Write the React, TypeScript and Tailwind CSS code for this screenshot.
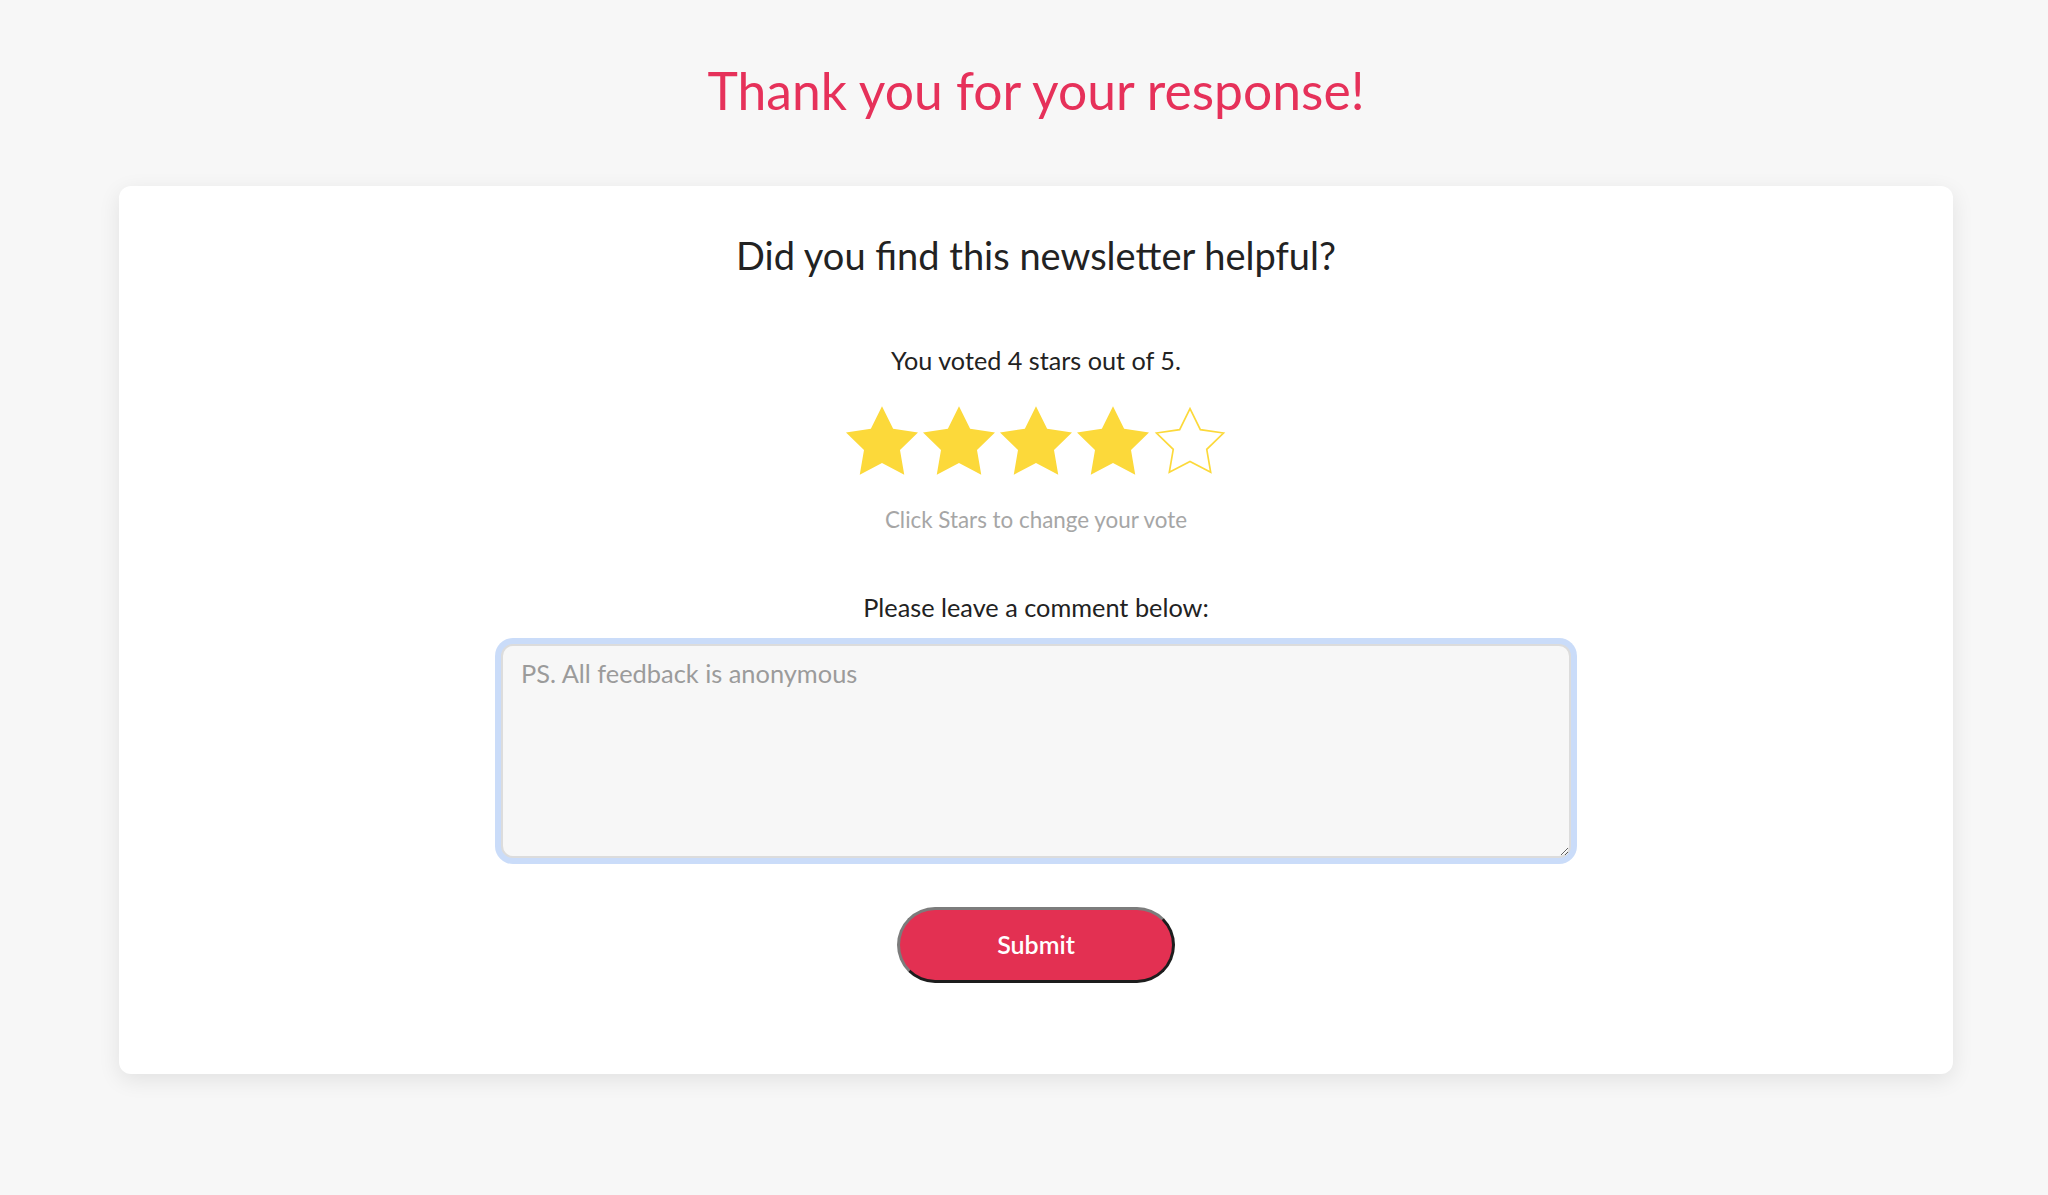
import { useState } from 'react';

const STAR_POINTS = '12,2 15.09,8.26 22,9.27 17,14.14 18.18,21.02 12,17.77 5.82,21.02 7,14.14 2,9.27 8.91,8.26';

function Star({ filled }: { filled: boolean }) {
  return (
    <svg viewBox="2 2 20 19.02" className="h-[69px] w-[72px] overflow-visible">
      {filled ? (
        <polygon points={STAR_POINTS} fill="#fcd93a" />
      ) : (
        <polygon
          points={STAR_POINTS}
          fill="none"
          stroke="#fcd93a"
          strokeWidth="0.5"
          strokeLinejoin="miter"
          transform="translate(12 11.5) scale(0.93) translate(-12 -11.5)"
        />
      )}
    </svg>
  );
}

export default function App() {
  const [rating, setRating] = useState(4);
  const [comment, setComment] = useState('');

  return (
    <div className="min-h-screen bg-[#f7f7f7] pl-[119px] pr-[95px] pt-[59px] font-['Lato','Liberation_Sans',sans-serif]">
      <h1 className="text-center text-[51.6px] leading-[62px] text-[#e6315a]">Thank you for your response!</h1>

      {/* Feedback card */}
      <div className="mt-[65px] flex flex-col items-center rounded-[12px] bg-white pt-[48px] pb-[91px] shadow-[0_6px_22px_rgba(0,0,0,0.09)]">
        <h2 className="text-[38px] leading-[43px] text-[#222222]">Did you find this newsletter helpful?</h2>

        <p className="mt-[68px] text-[25.2px] leading-[31px] text-[#222222]">
          You voted {rating} stars out of 5.
        </p>

        <div className="mt-[30px] flex gap-[5px]">
          {[1, 2, 3, 4, 5].map((n) => (
            <button key={n} onClick={() => setRating(n)} className="block">
              <Star filled={n <= rating} />
            </button>
          ))}
        </div>

        <p className="mt-[32px] text-[22.4px] leading-[26px] text-[#a6a6a6]">Click Stars to change your vote</p>

        <p className="mt-[59px] text-[25.3px] leading-[31px] text-[#222222]">Please leave a comment below:</p>

        <textarea
          value={comment}
          onChange={(e) => setComment(e.target.value)}
          placeholder="PS. All feedback is anonymous"
          autoFocus
          className="mt-[21px] h-[214px] w-[1070px] rounded-[12px] border-2 border-[#dcdcdc] bg-[#f7f7f7] px-[18px] pt-[12px] text-[25.4px] leading-[31px] text-[#222222] caret-[#222222] shadow-[0_0_0_6px_#cadcf9] outline-none placeholder:text-[#9b9b9b]"
        />

        <button className="mt-[49px] h-[76px] w-[278px] rounded-full border-[3px] border-t-[#7c7c7c] border-l-[#7c7c7c] border-r-[#1d1d1d] border-b-[#1d1d1d] bg-[#e33052] text-[25px] font-semibold text-white">
          Submit
        </button>
      </div>
    </div>
  );
}
